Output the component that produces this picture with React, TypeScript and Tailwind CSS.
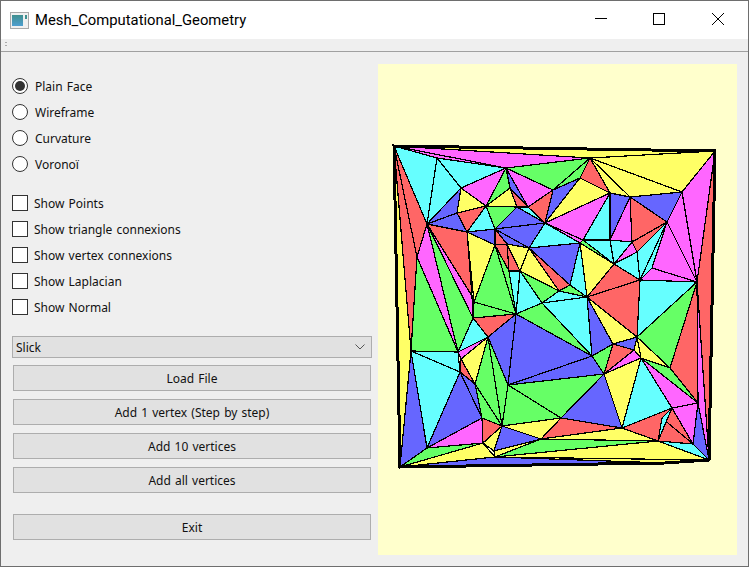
const R = "#ff6666";
const Y = "#ffff66";
const G = "#66ff66";
const C = "#66ffff";
const B = "#6666ff";
const M = "#ff66ff";

const v: Record<string, [number, number]> = {
  TL: [394, 146], TR: [715, 151], BL: [400, 467], BR: [709, 460], B3: [665, 463],
  a: [437, 158], b: [506, 168], c: [461, 188], d: [486, 206], e: [427, 224], f: [417, 257],
  g: [528, 207], h: [553, 190], i: [545, 223], j: [457, 213], k: [467, 232], l: [495, 229],
  m: [495, 245], n: [507, 244], o: [529, 248], p: [520, 271], q: [509, 271], r: [474, 302],
  t: [510, 188], t2: [517, 207], u: [590, 158], u2: [580, 178], v: [610, 193], w: [630, 197],
  x: [682, 192], y: [667, 222], y2: [652, 268], z: [697, 282], aa: [580, 243], ah: [583, 240],
  ab: [610, 240], ac: [632, 242], ad: [614, 264], ae: [637, 252], af: [640, 280], ag: [587, 297],
  ai: [570, 285], aj: [559, 291], ak: [542, 303], ba: [458, 352], bb: [411, 351], bc: [473, 318],
  bd: [516, 314], be: [488, 337], bf: [460, 372], bg: [475, 384], bh: [508, 385], bi: [502, 426],
  bj: [482, 418], bk: [427, 448], bl: [483, 443], bm: [495, 457], bn: [541, 439], bo: [561, 418],
  bq: [494, 451], b1: [461, 359], ca: [637, 337], cb: [613, 344], cc: [592, 356], cd: [604, 374],
  ce: [641, 358], cf: [622, 428], ch: [670, 368], ci: [698, 403], cj: [672, 408], ck: [658, 441],
  cl: [693, 444], c1: [634, 350], c2: [662, 418], r2: [472, 296],
};

// each entry: colour, then the three corners
const mesh: [string, string, string, string][] = [
  [Y, "TL", "u", "TR"], [M, "TL", "b", "u"], [M, "TL", "a", "b"], [C, "TL", "a", "e"],
  [C, "a", "c", "e"], [C, "a", "b", "c"], [M, "c", "b", "d"], [G, "b", "d", "t"],
  [Y, "d", "t", "t2"], [B, "b", "t", "g"], [R, "t", "g", "t2"], [M, "b", "g", "h"],
  [R, "g", "h", "i"], [G, "d", "t2", "l"], [C, "t2", "g", "i"], [B, "t2", "i", "l"],
  [Y, "c", "d", "j"], [B, "c", "j", "e"], [B, "e", "j", "k"], [R, "j", "d", "k"],
  [C, "k", "d", "l"], [B, "k", "l", "m"], [B, "l", "i", "o"], [R, "l", "m", "n"],
  [B, "l", "n", "o"], [C, "i", "aa", "o"], [G, "b", "u", "h"], [G, "h", "u", "u2"],
  [R, "u", "u2", "v"], [B, "h", "u2", "i"], [Y, "i", "u2", "v"], [M, "i", "v", "ah"],
  [M, "i", "ah", "aa"], [C, "v", "ah", "ab"], [B, "v", "ab", "w"], [M, "w", "ab", "ac"],
  [R, "w", "y", "ac"], [B, "w", "x", "y"], [Y, "u", "TR", "x"], [Y, "u", "x", "w"],
  [Y, "u", "w", "v"], [M, "x", "TR", "z"], [M, "x", "z", "y"], [R, "TR", "z", "BR"],
  [C, "ab", "ac", "ad"], [C, "ah", "ab", "ad"], [G, "ah", "ad", "aa"], [M, "ac", "ae", "ad"],
  [R, "ac", "y", "ae"], [C, "y", "ae", "af"], [C, "ae", "ad", "af"], [C, "y", "y2", "af"],
  [M, "y", "z", "y2"], [M, "y2", "z", "af"], [C, "af", "z", "ca"], [G, "z", "ca", "ch"],
  [R, "z", "ch", "ci"], [M, "z", "ci", "BR"], [R, "TL", "e", "f"], [R, "TL", "f", "bb"],
  [Y, "TL", "bb", "BL"], [B, "bb", "bk", "BL"], [C, "bb", "bf", "bk"], [C, "bb", "ba", "bf"],
  [G, "f", "ba", "bb"], [M, "e", "f", "ba"], [G, "e", "ba", "bc"], [M, "e", "r2", "bc"],
  [R, "e", "k", "r2"], [G, "r", "bc", "bd"], [G, "m", "bd", "r"], [G, "q", "m", "bd"],
  [Y, "k", "m", "r"], [R, "m", "n", "q"], [R, "n", "q", "p"], [Y, "n", "o", "p"],
  [C, "q", "p", "bd"], [C, "p", "ak", "bd"], [G, "p", "aj", "ak"], [Y, "p", "o", "aj"],
  [R, "o", "ai", "aj"], [B, "o", "aa", "ai"], [C, "aa", "ag", "ai"], [G, "aj", "ai", "ag"],
  [C, "ak", "aj", "ag"], [C, "ak", "ag", "cc"], [G, "bd", "ak", "cc"], [B, "bd", "cc", "bh"],
  [R, "be", "bc", "bd"], [B, "be", "bd", "bh"], [B, "bh", "cc", "cd"], [G, "bh", "cd", "bo"],
  [B, "ag", "cb", "cc"], [Y, "ag", "ca", "cb"], [Y, "aa", "ad", "ag"],
  [R, "ag", "ad", "af"], [R, "ag", "af", "ca"], [G, "cc", "cb", "cd"], [R, "cb", "c1", "cd"],
  [B, "cb", "ca", "c1"], [Y, "ca", "ce", "c1"], [M, "cd", "c1", "ce"], [Y, "ca", "ce", "ch"],
  [G, "ce", "ch", "ci"], [M, "ce", "ci", "cj"], [C, "ce", "cj", "cf"], [Y, "cd", "ce", "cf"],
  [B, "cd", "cf", "bo"], [R, "bo", "bn", "cf"], [R, "cf", "cj", "ck"], [M, "cj", "ci", "cl"],
  [R, "c2", "cl", "ck"], [R, "cj", "cl", "c2"], [C, "cj", "c2", "ck"], [B, "ci", "cl", "BR"],
  [C, "ck", "cl", "BR"], [C, "bc", "be", "ba"], [M, "ba", "be", "b1"], [Y, "be", "bg", "b1"],
  [R, "b1", "bg", "bf"], [G, "be", "bg", "bi"], [G, "be", "bi", "bh"], [G, "bh", "bi", "bo"],
  [G, "bg", "bj", "bi"], [B, "bg", "bf", "bj"], [B, "bf", "bj", "bk"], [M, "bk", "bj", "bl"],
  [R, "bj", "bi", "bl"], [Y, "bl", "bi", "bq"], [B, "bi", "bn", "bq"], [Y, "bi", "bo", "bn"],
  [G, "bk", "bl", "BL"], [Y, "BL", "bl", "bm"], [Y, "bq", "bn", "bm"], [G, "bm", "bn", "ck"],
  [Y, "bn", "cf", "ck"], [Y, "bm", "ck", "BR"], [Y, "bm", "B3", "BR"], [B, "BL", "bm", "B3"],
];

const pts = (names: string[]) => names.map((n) => v[n].join(",")).join(" ");

function MeshView() {
  return (
    <svg viewBox="378 64 359 491" className="w-full h-full block" shapeRendering="crispEdges">
      {mesh.map(([fill, p1, p2, p3], i) => (
        <polygon key={i} points={pts([p1, p2, p3])} fill={fill} stroke="#000" strokeWidth={1.2} strokeLinejoin="round" />
      ))}
      <polygon points={pts(["TL", "TR", "BR", "B3", "BL"])} fill="none" stroke="#000" strokeWidth={3} />
    </svg>
  );
}

function Radio({ label, checked }: { label: string; checked?: boolean }) {
  return (
    <div className="flex items-center h-[26px]">
      <div className="w-4 h-4 rounded-full border border-[#333] bg-white flex items-center justify-center">
        {checked && <div className="w-[10px] h-[10px] rounded-full bg-[#333]" />}
      </div>
      <span className="ml-[7px] pt-[2px]">{label}</span>
    </div>
  );
}

function Check({ label }: { label: string }) {
  return (
    <div className="flex items-center h-[26px]">
      <div className="w-4 h-4 border border-[#333] bg-white" />
      <span className="ml-[6px] pt-[2px]">{label}</span>
    </div>
  );
}

function Btn({ label, className }: { label: string; className: string }) {
  return (
    <div className={"mx-px h-[26px] pt-[2px] border border-[#adadad] bg-[#e1e1e1] flex items-center justify-center " + className}>
      {label}
    </div>
  );
}

export default function App() {
  return (
    <div className="w-[749px] h-[567px] overflow-hidden flex flex-col border border-[#6e6e6e] bg-[#efefef] text-[12px] text-[#111] [word-spacing:1px] font-['Noto_Sans','Liberation_Sans',sans-serif]">
      <div className="h-[38px] shrink-0 bg-white flex items-center">
        <svg width="19" height="17" viewBox="0 0 19 17" className="ml-[9px]">
          <rect x="0.5" y="0.5" width="18" height="16" fill="#f0f0f0" stroke="#a9a9a9" />
          <defs>
            <linearGradient id="pane" x1="0" y1="0" x2="0" y2="1">
              <stop offset="0" stopColor="#3f8f8f" />
              <stop offset="1" stopColor="#4f9fd0" />
            </linearGradient>
          </defs>
          <rect x="2" y="3" width="11" height="11" fill="url(#pane)" />
          <rect x="15" y="3" width="2" height="4" fill="#3f8f8f" />
        </svg>
        <span className="ml-[6px] text-[14.8px] text-black [word-spacing:0] font-['Roboto',sans-serif]">
          Mesh_Computational_Geometry
        </span>
        <div className="ml-auto flex items-center h-full">
          <svg width="58" height="38" viewBox="0 0 58 38" className="block">
            <path d="M7 17.5H19" stroke="#000" fill="none" />
          </svg>
          <svg width="58" height="38" viewBox="0 0 58 38" className="block">
            <rect x="7.5" y="12.5" width="11" height="11" stroke="#000" fill="none" />
          </svg>
          <svg width="44" height="38" viewBox="0 0 44 38" className="block">
            <path d="M8 12L20 24M20 12L8 24" stroke="#000" fill="none" />
          </svg>
        </div>
      </div>
      <div className="h-[13px] shrink-0 border-b border-[#a0a0a0] flex flex-col gap-[2px] pt-[3px] pl-1">
        <div className="w-[2px] h-[1px] bg-[#aaa]" />
        <div className="w-[2px] h-[1px] bg-[#aaa]" />
      </div>
      <div className="flex-1 flex min-h-0">
        <div className="w-[377px] shrink-0 pl-[11px] pr-[6px] pt-[21px]">
          <Radio label="Plain Face" checked />
          <Radio label="Wireframe" />
          <Radio label="Curvature" />
          <Radio label="Voronoï" />
          <div className="mt-[13px]">
            <Check label="Show Points" />
            <Check label="Show triangle connexions" />
            <Check label="Show vertex connexions" />
            <Check label="Show Laplacian" />
            <Check label="Show Normal" />
          </div>
          <div className="mt-[16px] h-[22px] border border-[#adadad] bg-[#e1e1e1] flex items-center pl-[3px] pr-[6px] justify-between">
            <span className="pt-[2px]">Slick</span>
            <svg width="10" height="6" viewBox="0 0 10 6">
              <path d="M0.5 0.5L5 5L9.5 0.5" stroke="#555" fill="none" />
            </svg>
          </div>
          <Btn label="Load File" className="mt-[7px]" />
          <Btn label="Add 1 vertex (Step by step)" className="mt-[8px]" />
          <Btn label="Add 10 vertices" className="mt-[8px]" />
          <Btn label="Add all vertices" className="mt-[8px]" />
          <Btn label="Exit" className="mt-[21px]" />
        </div>
        <div className="w-[359px] h-[491px] mt-[12px] bg-[#ffffcc]">
          <MeshView />
        </div>
      </div>
    </div>
  );
}
